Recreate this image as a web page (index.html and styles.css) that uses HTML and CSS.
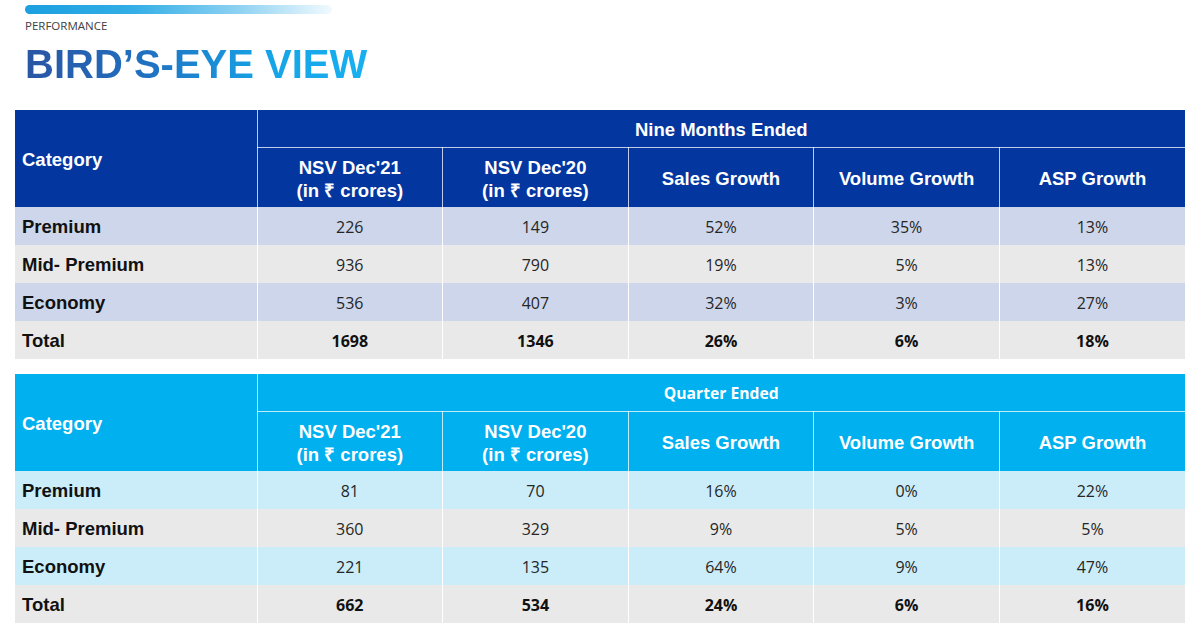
FILE: index.html
```html
<!DOCTYPE html>
<html>
<head>
<meta charset="utf-8">
<link rel="stylesheet" href="styles.css">
</head>
<body>
<div class="page">
  <header class="head">
    <div class="bar"></div>
    <div class="kicker">PERFORMANCE</div>
    <h1 class="title"><span>BIRD’S-EYE VIEW</span></h1>
  </header>

  <table class="tbl nine">
    <colgroup>
      <col class="c-cat"><col><col><col><col><col>
    </colgroup>
    <thead>
      <tr class="h1">
        <th rowspan="2" class="cat">Category</th>
        <th colspan="5" class="span">Nine Months Ended</th>
      </tr>
      <tr class="h2">
        <th>NSV Dec'21<br>(in ₹ crores)</th>
        <th>NSV Dec'20<br>(in ₹ crores)</th>
        <th>Sales Growth</th>
        <th>Volume Growth</th>
        <th>ASP Growth</th>
      </tr>
    </thead>
    <tbody>
      <tr class="a"><td class="name">Premium</td><td>226</td><td>149</td><td>52%</td><td>35%</td><td>13%</td></tr>
      <tr class="b"><td class="name">Mid- Premium</td><td>936</td><td>790</td><td>19%</td><td>5%</td><td>13%</td></tr>
      <tr class="a"><td class="name">Economy</td><td>536</td><td>407</td><td>32%</td><td>3%</td><td>27%</td></tr>
      <tr class="b total"><td class="name">Total</td><td>1698</td><td>1346</td><td>26%</td><td>6%</td><td>18%</td></tr>
    </tbody>
  </table>

  <table class="tbl quarter">
    <colgroup>
      <col class="c-cat"><col><col><col><col><col>
    </colgroup>
    <thead>
      <tr class="h1">
        <th rowspan="2" class="cat">Category</th>
        <th colspan="5" class="span q">Quarter Ended</th>
      </tr>
      <tr class="h2">
        <th>NSV Dec'21<br>(in ₹ crores)</th>
        <th>NSV Dec'20<br>(in ₹ crores)</th>
        <th>Sales Growth</th>
        <th>Volume Growth</th>
        <th>ASP Growth</th>
      </tr>
    </thead>
    <tbody>
      <tr class="a"><td class="name">Premium</td><td>81</td><td>70</td><td>16%</td><td>0%</td><td>22%</td></tr>
      <tr class="b"><td class="name">Mid- Premium</td><td>360</td><td>329</td><td>9%</td><td>5%</td><td>5%</td></tr>
      <tr class="a"><td class="name">Economy</td><td>221</td><td>135</td><td>64%</td><td>9%</td><td>47%</td></tr>
      <tr class="b total"><td class="name">Total</td><td>662</td><td>534</td><td>24%</td><td>6%</td><td>16%</td></tr>
    </tbody>
  </table>
</div>
</body>
</html>
```

FILE: styles.css
```css
html, body {
  margin: 0;
  padding: 0;
  background: #ffffff;
}

.page {
  width: 1200px;
  height: 626px;
  overflow: hidden;
  padding: 5px 15px 0 15px;
  box-sizing: border-box;
  font-family: "Liberation Sans", Arial, sans-serif;
}

.head {
  padding-left: 10px;
  height: 105px;
}

.bar {
  width: 307px;
  height: 9px;
  border-radius: 5px;
  background: linear-gradient(90deg, #1b9fe0 0%, #33aee6 35%, #8fd2f2 70%, #f2fafe 100%);
}

.kicker {
  margin-top: 5px;
  font-family: "Open Sans", sans-serif;
  font-size: 11.5px;
  line-height: 14px;
  color: #404040;
}

.title {
  margin: 9px 0 0 0;
  font-family: "Liberation Sans", Arial, sans-serif;
  font-size: 40px;
  line-height: 44px;
  font-weight: bold;
}

.title span {
  display: inline-block;
  background: linear-gradient(90deg, #2a55a3 0%, #2070c0 35%, #16a3e6 70%, #18b0f0 100%);
  -webkit-background-clip: text;
  background-clip: text;
  color: transparent;
}

.tbl {
  width: 1170px;
  border-collapse: collapse;
  table-layout: fixed;
}

.tbl.quarter {
  margin-top: 15px;
}

.c-cat {
  width: 242px;
}

.tbl th {
  color: #ffffff;
  font-family: "Liberation Sans", Arial, sans-serif;
  font-weight: bold;
  font-size: 18.5px;
  line-height: 23px;
  text-align: center;
  padding: 0;
  border: 1px solid rgba(255, 255, 255, 0.75);
}

.tbl thead tr:first-child th {
  border-top: none;
}

.tbl th:last-child,
.tbl td:last-child {
  border-right: none;
}

.tbl th.cat {
  text-align: left;
  padding-left: 7px;
  border-left: none;
  border-bottom: none;
  vertical-align: middle;
}

.tbl .h1 th {
  height: 36px;
  padding-top: 1px;
}

.tbl .h2 th {
  height: 57px;
  padding-top: 2px;
  border-bottom: none;
}

.nine th {
  background: #0436a0;
}

.quarter th {
  background: #00b0ef;
}

.tbl th.q {
  font-family: "Open Sans", sans-serif;
  font-size: 15.7px;
}

.tbl td {
  height: 36px;
  padding: 2px 0 0 0;
  text-align: center;
  font-family: "Open Sans", sans-serif;
  font-size: 16px;
  color: #262626;
  border-left: 1px solid #ffffff;
  border-right: 1px solid #ffffff;
}

.tbl td.name {
  text-align: left;
  padding-left: 7px;
  font-family: "Liberation Sans", Arial, sans-serif;
  font-weight: bold;
  font-size: 18.5px;
  color: #111111;
  border-left: none;
}

.tbl .total td {
  font-weight: bold;
  color: #111111;
}

.nine .a td {
  background: #cdd6ea;
}

.quarter .a td {
  background: #cbedfa;
}

.tbl .b td {
  background: #e9e9e9;
}
```
